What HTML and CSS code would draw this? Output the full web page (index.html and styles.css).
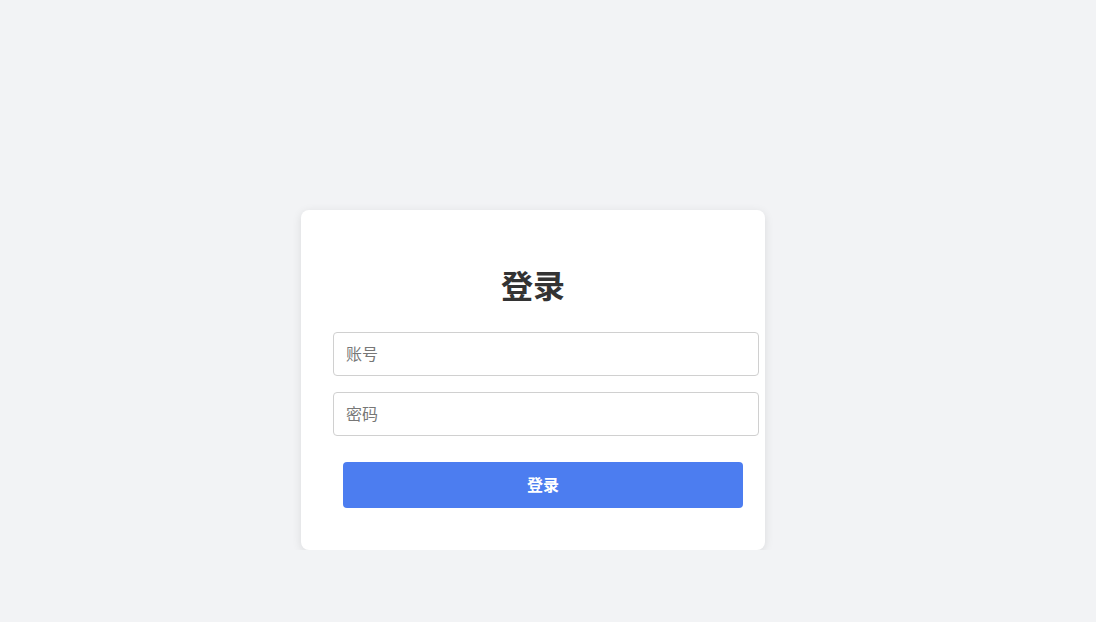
FILE: index.html
```html
<!DOCTYPE html>
<html lang="zh-CN">
<head>
<meta charset="utf-8">
<title>登录</title>
<link rel="stylesheet" href="styles.css">
</head>
<body>
<div class="page">
  <div class="card">
    <h2 class="title">登录</h2>
    <form class="form">
      <input class="field" type="text" placeholder="账号">
      <input class="field" type="password" placeholder="密码">
      <button class="btn" type="button">登录</button>
    </form>
  </div>
</div>
</body>
</html>
```
FILE: styles.css
```css
html, body {
  margin: 0;
  padding: 0;
  background: #f2f3f5;
  font-family: "Noto Sans CJK SC", "Noto Sans", sans-serif;
}
.page {
  padding: 210px 0 0 301px;
}
.card {
  width: 400px;
  padding: 55px 32px 42px;
  background: #fff;
  border-radius: 8px;
  box-shadow: 0 2px 10px rgba(0, 0, 0, 0.1);
}
.title {
  margin: 0 0 29px;
  font-size: 32px;
  line-height: 38px;
  font-weight: 700;
  color: #333;
  text-align: center;
}
.form {
  display: flex;
  flex-direction: column;
}
.field {
  width: 400px;
  height: 40px;
  padding: 0 12px 2px;
  margin: 0 0 16px;
  border: 1px solid #d0d0d0;
  border-radius: 4px;
  font-family: inherit;
  font-size: 16px;
  color: #333;
  background: #fff;
  outline: none;
}
.field::placeholder {
  color: #777;
}
.field:last-of-type {
  margin-bottom: 26px;
}
.btn {
  width: 400px;
  height: 46px;
  margin-left: 10px;
  padding: 0 0 2px;
  border: none;
  border-radius: 4px;
  background: #4c7df0;
  color: #fff;
  font-family: inherit;
  font-size: 16px;
  font-weight: 700;
  cursor: pointer;
}
```
